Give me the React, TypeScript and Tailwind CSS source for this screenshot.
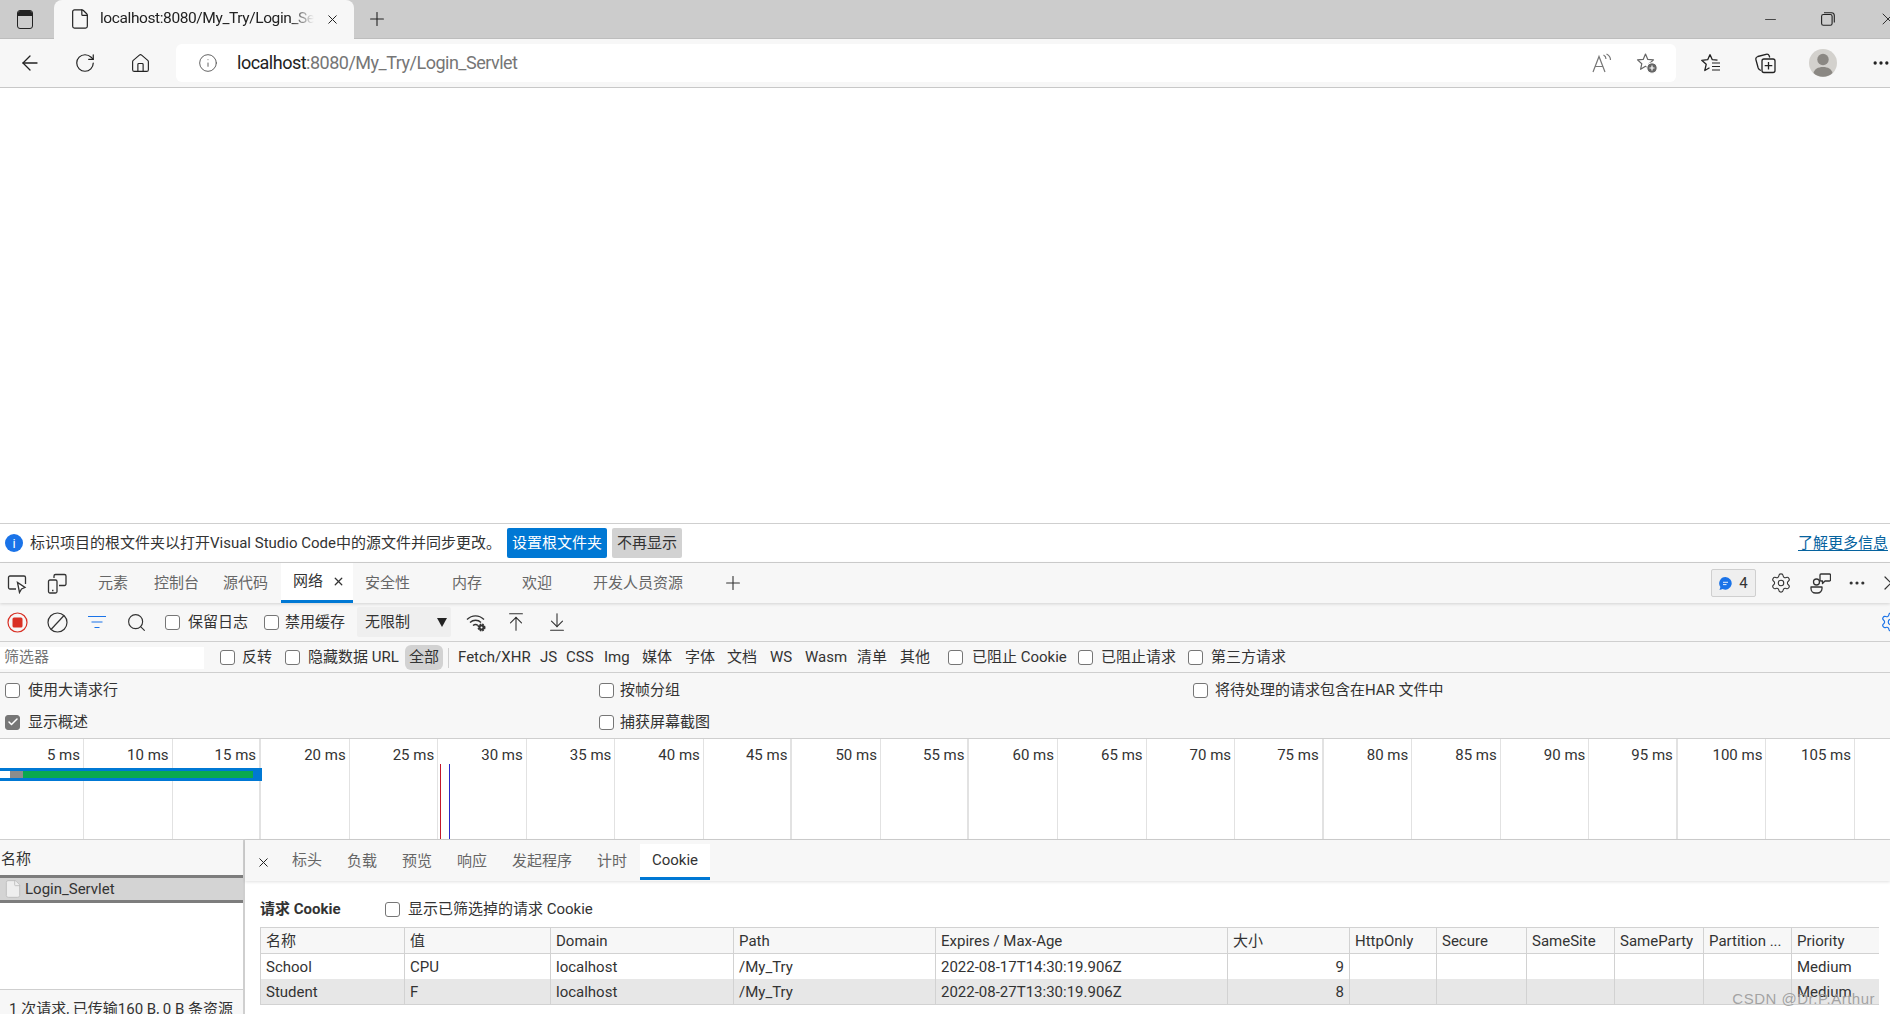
import { ArrowLeft, RotateCw, Home, Info, File, Plus, X, Minus, Settings, Search, ArrowUpToLine, ArrowDownToLine, ChevronRight, Ellipsis, Check } from 'lucide-react'

const TICKS = [5, 10, 15, 20, 25, 30, 35, 40, 45, 50, 55, 60, 65, 70, 75, 80, 85, 90, 95, 100, 105]
const THICK = [15, 45, 55, 75, 95]

const COLS = 'grid grid-cols-[144px_146px_183px_202px_292px_122px_87px_90px_88px_89px_88px_88px]'
const HEADERS = ['名称', '值', 'Domain', 'Path', 'Expires / Max-Age', '大小', 'HttpOnly', 'Secure', 'SameSite', 'SameParty', 'Partition ...', 'Priority']
const ROWS = [
  ['School', 'CPU', 'localhost', '/My_Try', '2022-08-17T14:30:19.906Z', '9', '', '', '', '', '', 'Medium'],
  ['Student', 'F', 'localhost', '/My_Try', '2022-08-27T13:30:19.906Z', '8', '', '', '', '', '', 'Medium'],
]

function Box({ checked, className = '' }: { checked?: boolean; className?: string }) {
  return (
    <span className={`flex h-[15px] w-[15px] shrink-0 items-center justify-center rounded-[3px] border border-[#767676] ${checked ? 'bg-[#767676]' : 'bg-white'} ${className}`}>
      {checked && <Check size={12} strokeWidth={3} className="text-white" />}
    </span>
  )
}

function InspectIcon() {
  return (
    <svg width="21" height="21" viewBox="0 0 21 21" fill="none" stroke="#333" strokeWidth="1.3">
      <path d="M9 16H3a1.5 1.5 0 0 1-1.5-1.5v-10A1.5 1.5 0 0 1 3 3h14a1.5 1.5 0 0 1 1.5 1.5V11" />
      <path d="M10.5 9.5l2 10 2-3.5 3.5-1.5z" fill="#fff" />
    </svg>
  )
}

function DeviceIcon() {
  return (
    <svg width="21" height="21" viewBox="0 0 21 21" fill="none" stroke="#333" strokeWidth="1.3">
      <path d="M7 5V3a1.5 1.5 0 0 1 1.5-1.5h9A1.5 1.5 0 0 1 19 3v8a1.5 1.5 0 0 1-1.5 1.5H12" />
      <rect x="1.5" y="7" width="8.5" height="13" rx="1.5" />
      <path d="M5 17.5h1.5" />
    </svg>
  )
}

function FavAddIcon() {
  return (
    <svg width="22" height="22" viewBox="0 0 22 22" fill="none">
      <path d="M9.5 2l2.3 5.4 5.7.5-4.3 3.8 1.2 5.6-4.9-3-4.9 3 1.2-5.6L1.5 7.9l5.7-.5z" stroke="#666" strokeWidth="1.2" strokeLinejoin="round" />
      <circle cx="16" cy="16" r="5.2" fill="#666" stroke="#fff" />
      <path d="M16 13.5v5M13.5 16h5" stroke="#fff" strokeWidth="1.2" />
    </svg>
  )
}

function ReadAloudIcon() {
  return (
    <svg width="20" height="20" viewBox="0 0 20 20" fill="none" stroke="#777" strokeWidth="1.2">
      <path d="M1 19L7 3.5 13 19M3.2 13.5h7.6" />
      <path d="M11.5 2c1.6.8 2.5 2.2 2.5 4M14.5 1c2.4 1.2 4 3.2 4 6" />
    </svg>
  )
}

function FavListIcon() {
  return (
    <svg width="21" height="21" viewBox="0 0 21 21" fill="none" stroke="#222" strokeWidth="1.3" strokeLinejoin="round">
      <path d="M10 1.5l2.3 5.2 5.2.5M10 1.5L7.7 6.7l-6 .6 4.5 4-1.4 6.2 4.7-2.7" />
      <path d="M12 10h8M12 13.5h8M12 17h8" strokeWidth="1.1" />
    </svg>
  )
}

function CollectionsIcon() {
  return (
    <svg width="21" height="21" viewBox="0 0 21 21" fill="none" stroke="#222" strokeWidth="1.3" strokeLinejoin="round">
      <path d="M6 17.5c-1.5-.5-2.3-1-2.8-2.5L1 7c-.5-1.5.3-3 1.8-3.500L11 1.300c1.500-.4 2.800.3 3.300 1.700l.4 1.500" />
      <rect x="7" y="6" width="13" height="13.500" rx="2" />
      <path d="M13.500 9v7.500M9.700 12.700h7.600" />
    </svg>
  )
}

function AvatarIcon() {
  return (
    <svg width="28" height="28" viewBox="0 0 28 28">
      <circle cx="14" cy="14" r="14" fill="#d3d1cd" />
      <circle cx="14" cy="10.500" r="5.700" fill="#8b8883" />
      <path d="M4.500 24c1-4 4.500-6 9.500-6s8.500 2 9.500 6a14 14 0 0 1-19 0z" fill="#8b8883" />
    </svg>
  )
}

function WifiGearIcon() {
  return (
    <svg width="21" height="21" viewBox="0 0 21 21" fill="none" stroke="#333" strokeWidth="1.4">
      <path d="M1 7.500c5-4.800 12-4.800 17 0M4 10.500c3.300-3 8-3 11 0M7 13.500c1.600-1.300 3.400-1.300 5 0" />
      <circle cx="15.500" cy="15.500" r="3" fill="#333" stroke="#333" strokeWidth="2" strokeDasharray="1.500 0.900" />
      <circle cx="15.500" cy="15.500" r="1" fill="#fff" stroke="none" />
    </svg>
  )
}

function FeedbackIcon() {
  return (
    <svg width="21" height="21" viewBox="0 0 21 21" fill="none" stroke="#333" strokeWidth="1.3" strokeLinejoin="round">
      <circle cx="6.500" cy="9" r="3" />
      <path d="M1 14h11v1.500a4.500 4.500 0 0 1-4.500 4.500h-2A4.500 4.500 0 0 1 1 15.500z" />
      <path d="M11 1h8.500a1 1 0 0 1 1 1v5a1 1 0 0 1-1 1H15l-2.500 2.500V8H11a1 1 0 0 1-1-1V2a1 1 0 0 1 1-1z" />
    </svg>
  )
}

export default function App() {
  return (
    <div className="flex h-[1014px] w-[1890px] flex-col overflow-hidden bg-white text-[15px] leading-none text-[#333] [font-family:'Roboto','Noto_Sans_CJK_SC',sans-serif]">
      {/* tab strip */}
      <div className="flex h-[39px] shrink-0 items-center border-b border-[#bdbdbd] bg-[#cccccc] [&>*]:shrink-0">
        <span className="ml-[17px] flex h-[19px] w-[16px] flex-col overflow-hidden rounded-[3px] border-[1.5px] border-[#222]">
          <span className="h-[5px] bg-[#222]" />
        </span>
        <div className="ml-[21px] flex h-[39px] w-[300px] items-center rounded-t-[8px] bg-[#f7f7f7]">
          <File size={22} strokeWidth={1.3} className="ml-[15px] shrink-0 text-[#222]" />
          <span className="ml-[9px] w-[214px] shrink-0 overflow-hidden text-[15.5px] tracking-[-0.4px] whitespace-nowrap text-[#222] [mask-image:linear-gradient(to_right,black_190px,transparent_214px)]">localhost:8080/My_Try/Login_Servlet</span>
          <X size={15} strokeWidth={1.6} className="ml-[11px] shrink-0 text-[#222]" />
        </div>
        <Plus size={22} strokeWidth={1.2} className="ml-[12px] text-[#222]" />
        <Minus size={17} strokeWidth={1.1} className="ml-[1374px] text-[#222]" />
        <svg width="14" height="14" viewBox="0 0 14 14" fill="none" stroke="#222" strokeWidth="1.1" className="ml-[42px]">
          <rect x="0.600" y="2.500" width="10.500" height="10.800" rx="1.800" />
          <path d="M3 .700h7.500a2.800 2.800 0 0 1 2.800 2.800V10.500" />
        </svg>
        <X size={20} strokeWidth={1.1} className="ml-[43px] text-[#222]" />
      </div>

      {/* address toolbar */}
      <div className="flex h-[49px] shrink-0 items-center border-b border-[#c8c8c8] bg-[#f7f7f7] [&>*]:shrink-0">
        <ArrowLeft size={24} strokeWidth={1.3} className="ml-[18px] text-[#222]" />
        <RotateCw size={22} strokeWidth={1.3} className="ml-[32px] text-[#222]" />
        <Home size={21} strokeWidth={1.3} className="ml-[34px] text-[#222]" />
        <div className="ml-[25px] flex h-[38px] w-[1500px] items-center rounded-[6px] bg-white">
          <Info size={20} strokeWidth={1.1} className="ml-[22px] text-[#555]" />
          <span className="ml-[19px] text-[18px] tracking-[-0.5px]">
            <span className="text-[#222]">localhost</span>
            <span className="text-[#767676]">:8080/My_Try/Login_Servlet</span>
          </span>
          <span className="ml-auto mr-[18px] flex items-center gap-[24px]">
            <ReadAloudIcon />
            <FavAddIcon />
          </span>
        </div>
        <span className="ml-[24px]"><FavListIcon /></span>
        <span className="ml-[34px]"><CollectionsIcon /></span>
        <span className="ml-[33px]"><AvatarIcon /></span>
        <Ellipsis size={20} strokeWidth={2} className="ml-[34px] text-[#222]" />
      </div>

      {/* page body */}
      <div className="flex-1 bg-white" />

      {/* info bar */}
      <div className="flex h-[40px] shrink-0 items-center border-y border-[#cfcfcf] bg-white [&>*]:shrink-0">
        <span className="ml-[5px] flex h-[18px] w-[18px] items-center justify-center rounded-full bg-[#1a73e8] text-[13px] text-white">i</span>
        <span className="ml-[7px] w-[477px] text-[#333]">标识项目的根文件夹以打开Visual Studio Code中的源文件并同步更改。</span>
        <span className="flex h-[30px] w-[100px] items-center justify-center rounded-[2px] bg-[#0078d4] text-white">设置根文件夹</span>
        <span className="ml-[5px] flex h-[30px] w-[70px] items-center justify-center rounded-[2px] bg-[#d2d2d2]">不再显示</span>
        <span className="ml-auto mr-[2px] text-[#06639f] underline underline-offset-2">了解更多信息</span>
      </div>

      {/* devtools tabs */}
      <div className="z-10 flex h-[40px] shrink-0 items-center bg-[#f7f7f7] text-[#666] shadow-[0_1px_3px_rgba(0,0,0,0.15)] [&>*]:shrink-0">
        <span className="ml-[7px]"><InspectIcon /></span>
        <span className="ml-[19px]"><DeviceIcon /></span>
        <span className="ml-[30px] w-[56px]">元素</span>
        <span className="w-[69px]">控制台</span>
        <span className="w-[58px]">源代码</span>
        <div className="flex h-[40px] w-[72px] items-center justify-between border-b-[3px] border-[#0078d4] bg-white pl-[12px] pr-[8px] text-[#333]">
          <span>网络</span>
          <X size={13} strokeWidth={2.4} />
        </div>
        <span className="ml-[12px] w-[87px]">安全性</span>
        <span className="w-[70px]">内存</span>
        <span className="w-[71px]">欢迎</span>
        <span className="w-[129px]">开发人员资源</span>
        <Plus size={22} strokeWidth={1.2} className="text-[#333]" />
        <div className="ml-[967px] flex h-[28px] w-[45px] items-center justify-center gap-[7px] rounded-[2px] border border-[#cfcfcf] bg-[#efefef] text-[#333]">
          <svg width="13" height="13" viewBox="0 0 13 13">
            <path d="M6.500 0a6.300 6.300 0 1 1-2.800 12L.500 13l.9-3A6.300 6.300 0 0 1 6.500 0z" fill="#1a73e8" />
            <path d="M4 5.300h5M4 7.600h3.500" stroke="#fff" strokeWidth="0.900" />
          </svg>
          4
        </div>
        <Settings size={22} strokeWidth={1.2} className="ml-[14px] text-[#333]" />
        <span className="ml-[18px]"><FeedbackIcon /></span>
        <Ellipsis size={20} strokeWidth={1.8} className="ml-[16px] text-[#333]" />
        <ChevronRight size={24} strokeWidth={1.2} className="ml-[9px] text-[#333]" />
      </div>

      {/* network toolbar */}
      <div className="flex h-[39px] shrink-0 items-center border-b border-[#cfcfcf] bg-[#f7f7f7] [&>*]:shrink-0">
        <svg width="21" height="21" viewBox="0 0 21 21" className="ml-[7px]">
          <circle cx="10.500" cy="10.500" r="9.500" fill="none" stroke="#d93025" strokeWidth="1.200" />
          <rect x="5.500" y="5.500" width="10" height="10" rx="1.500" fill="#d93025" />
        </svg>
        <svg width="21" height="21" viewBox="0 0 21 21" fill="none" stroke="#333" strokeWidth="1.200" className="ml-[19px]">
          <circle cx="10.500" cy="10.500" r="9.500" />
          <path d="M4 17.500L17 3.500" />
        </svg>
        <svg width="18" height="14" viewBox="0 0 18 14" fill="none" stroke="#1a73e8" strokeWidth="1.100" className="ml-[20px]">
          <path d="M0 1.500h18M3.500 7h11M6.500 12.500h5" />
        </svg>
        <Search size={21} strokeWidth={1.300} className="ml-[20px] text-[#333]" />
        <Box className="ml-[18px]" />
        <span className="ml-[8px] w-[76px]">保留日志</span>
        <Box />
        <span className="ml-[6px] w-[72px]">禁用缓存</span>
        <div className="flex h-[30px] w-[94px] items-center justify-between rounded-[2px] bg-[#efefef] pl-[8px] pr-[4px]">
          <span>无限制</span>
          <span className="h-0 w-0 border-x-[5px] border-t-[9px] border-x-transparent border-t-[#222]" />
        </div>
        <span className="ml-[15px]"><WifiGearIcon /></span>
        <ArrowUpToLine size={22} strokeWidth={1.200} className="ml-[18px] text-[#333]" />
        <ArrowDownToLine size={22} strokeWidth={1.200} className="ml-[19px] text-[#333]" />
        <Settings size={22} strokeWidth={1.300} className="ml-[1312px] text-[#1a73e8]" />
      </div>

      {/* filter row */}
      <div className="flex h-[31px] shrink-0 items-center border-b border-[#cfcfcf] bg-[#f7f7f7] pt-[1px] [&>*]:shrink-0">
        <div className="flex h-[22px] w-[204px] items-center bg-white pl-[4px] text-[#757575]">筛选器</div>
        <Box className="ml-[16px]" />
        <span className="ml-[7px] w-[43px]">反转</span>
        <Box />
        <span className="ml-[8px] w-[97px]">隐藏数据 URL</span>
        <span className="flex h-[25px] w-[38px] items-center justify-center rounded-[6px] bg-[#d2d2d2]">全部</span>
        <span className="ml-[5px] h-[20px] w-px bg-[#cfcfcf]" />
        <span className="ml-[9px] w-[82px]">Fetch/XHR</span>
        <span className="w-[26px]">JS</span>
        <span className="w-[38px]">CSS</span>
        <span className="w-[38px]">Img</span>
        <span className="w-[43px]">媒体</span>
        <span className="w-[42px]">字体</span>
        <span className="w-[43px]">文档</span>
        <span className="w-[35px]">WS</span>
        <span className="w-[52px]">Wasm</span>
        <span className="w-[43px]">清单</span>
        <span className="w-[48px]">其他</span>
        <Box />
        <span className="ml-[9px] w-[106px]">已阻止 Cookie</span>
        <Box />
        <span className="ml-[8px] w-[87px]">已阻止请求</span>
        <Box />
        <span className="ml-[8px]">第三方请求</span>
      </div>

      {/* settings rows */}
      <div className="grid h-[66px] shrink-0 grid-cols-[599px_594px_1fr] grid-rows-2 items-center border-b border-[#cfcfcf] bg-[#f7f7f7] pt-[2px]">
        <label className="flex items-center gap-[8px] pl-[5px]"><Box />使用大请求行</label>
        <label className="flex items-center gap-[6px]"><Box />按帧分组</label>
        <label className="flex items-center gap-[7px]"><Box />将待处理的请求包含在HAR 文件中</label>
        <label className="flex items-center gap-[8px] pl-[5px]"><Box checked />显示概述</label>
        <label className="flex items-center gap-[6px]"><Box />捕获屏幕截图</label>
      </div>

      {/* overview */}
      <div className="relative flex h-[101px] shrink-0 border-b border-[#cfcfcf] bg-white">
        {TICKS.map((t, i) => (
          <div
            key={t}
            className={`h-full shrink-0 pr-[3px] pt-[9px] text-right whitespace-nowrap ${i === 0 ? 'w-[84px]' : 'w-[88.55px]'} ${THICK.includes(t) ? 'border-r-2' : 'border-r'} border-[#e2e2e2]`}
          >
            {t} ms
          </div>
        ))}
        <div className="absolute left-0 top-[29px] flex h-[13px] w-[262px] border-y-[3px] border-r-[9px] border-[#0078d4] bg-[#0078d4]">
          <span className="w-[10px] bg-white" />
          <span className="w-[13px] bg-[#8c8c8c]" />
          <span className="w-[230px] bg-[#0aa84f]" />
        </div>
        <span className="absolute left-[440px] top-[25px] bottom-0 w-px bg-[#c2182b]" />
        <span className="absolute left-[449px] top-[25px] bottom-0 w-px bg-[#2a2ac8]" />
      </div>

      {/* bottom panels */}
      <div className="relative flex h-[174px] shrink-0">
        <div className="flex w-[245px] shrink-0 flex-col border-r-2 border-[#cfcfcf]">
          <div className="flex h-[35px] shrink-0 items-center bg-[#f7f7f7] pl-[1px] pt-[3px]">名称</div>
          <div className="flex h-[28px] shrink-0 items-center border-y-[3px] border-[#7d7d7d] bg-[#d4d4d4] pl-[3px]">
            <File size={20} strokeWidth={1} fill="#eee" className="text-[#bbb]" />
            <span className="ml-[2px]">Login_Servlet</span>
          </div>
          <div className="flex-1" />
          <div className="h-[25px] shrink-0 overflow-hidden whitespace-nowrap border-t border-[#cfcfcf] bg-[#f7f7f7] pl-[9px] pt-[12px]">1 次请求, 已传输160 B, 0 B 条资源</div>
        </div>
        <div className="min-w-0 flex-1">
          <div className="flex h-[41px] items-end bg-[#f7f7f7] text-[#666] shadow-[0_1px_3px_rgba(0,0,0,0.12)]">
            <span className="flex h-[41px] items-center pl-[11px] pt-[3px]"><X size={15} strokeWidth={1.600} className="text-[#222]" /></span>
            <span className="box-content flex h-[41px] w-[55px] items-center pl-[21px] pt-[2px]">标头</span>
            <span className="flex h-[41px] w-[55px] items-center pt-[2px]">负载</span>
            <span className="flex h-[41px] w-[55px] items-center pt-[2px]">预览</span>
            <span className="flex h-[41px] w-[55px] items-center pt-[2px]">响应</span>
            <span className="flex h-[41px] w-[85px] items-center pt-[2px]">发起程序</span>
            <span className="flex h-[41px] w-[43px] items-center pt-[2px]">计时</span>
            <span className="mb-px flex h-[36px] w-[70px] items-center justify-center border-b-[3px] border-[#0078d4] bg-white text-[#333]">Cookie</span>
          </div>
          <div className="mt-[18px] flex h-[20px] items-center pl-[15px]">
            <span className="w-[125px] font-bold">请求 Cookie</span>
            <Box />
            <span className="ml-[8px]">显示已筛选掉的请求 Cookie</span>
          </div>
          <div className="ml-[15px] mt-[8px] w-[1619px] border-y border-[#d2d2d2]">
            <div className={`${COLS} h-[26px] border-b border-[#d2d2d2] bg-[#f7f7f7]`}>
              {HEADERS.map((h, i) => (
                <div key={i} className="flex items-center truncate border-l border-[#d2d2d2] pl-[5px] pt-[1px]">{h}</div>
              ))}
            </div>
            {ROWS.map((row, r) => (
              <div key={r} className={`${COLS} h-[25px] ${r === 1 ? 'bg-[#e7e7e7]' : 'bg-white'}`}>
                {row.map((c, i) => (
                  <div key={i} className={`flex items-center border-l border-[#d2d2d2] pt-[1px] ${i === 5 ? 'justify-end pr-[5px]' : 'pl-[5px]'}`}>{c}</div>
                ))}
              </div>
            ))}
          </div>
        </div>
        <span className="absolute bottom-[8px] right-[15px] text-[15px] tracking-[0.5px] text-[#9a9a9a]/90 [font-family:'Liberation_Sans',sans-serif]">CSDN @Dr.P.Arthur</span>
      </div>
    </div>
  )
}
